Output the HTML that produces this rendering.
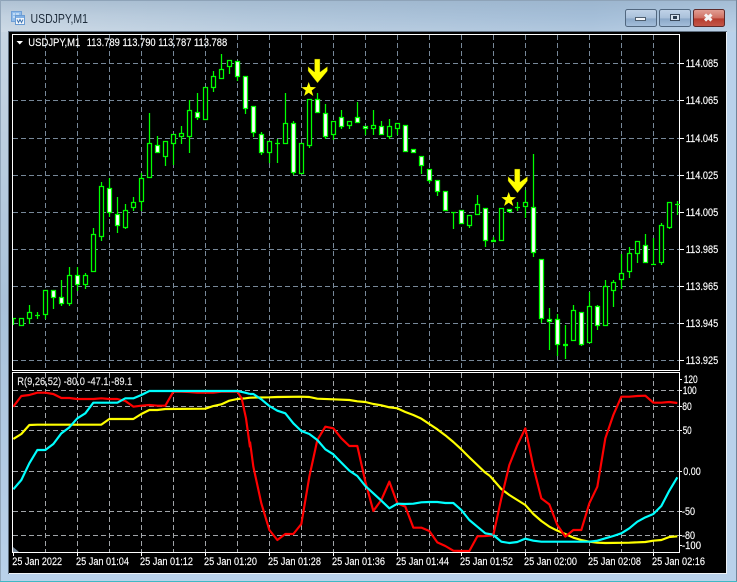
<!DOCTYPE html>
<html><head><meta charset="utf-8"><title>USDJPY,M1</title>
<style>html,body{margin:0;padding:0;background:#b9d1ea;width:737px;height:582px;overflow:hidden}svg{display:block}text{font-family:"Liberation Sans",sans-serif;font-size:11px;fill:#fff;stroke:#fff;stroke-width:.15px}</style></head>
<body>
<svg width="737" height="582" viewBox="0 0 737 582" xmlns="http://www.w3.org/2000/svg">
<defs>
<linearGradient id="tb" x1="0" y1="0" x2="1" y2="0"><stop offset="0" stop-color="#c8d6e3"/><stop offset=".35" stop-color="#b4c9dd"/><stop offset=".8" stop-color="#a6c0da"/><stop offset="1" stop-color="#b4cce4"/></linearGradient>
<linearGradient id="tv" x1="0" y1="0" x2="0" y2="1"><stop offset="0" stop-color="#8fa8c0" stop-opacity=".45"/><stop offset=".5" stop-color="#8fa8c0" stop-opacity=".1"/><stop offset="1" stop-color="#fff" stop-opacity=".12"/></linearGradient>
<linearGradient id="lf" x1="0" y1="0" x2="0" y2="1"><stop offset="0" stop-color="#c8d6e3"/><stop offset=".5" stop-color="#a9c2da"/><stop offset="1" stop-color="#b9d1ea"/></linearGradient>
<linearGradient id="bb" x1="0" y1="0" x2="0" y2="1"><stop offset="0" stop-color="#c0d3e8"/><stop offset=".5" stop-color="#a9c0da"/><stop offset=".55" stop-color="#8ba8c8"/><stop offset="1" stop-color="#a5bfdb"/></linearGradient>
<linearGradient id="bc" x1="0" y1="0" x2="0" y2="1"><stop offset="0" stop-color="#e2a196"/><stop offset=".5" stop-color="#cf6f62"/><stop offset=".55" stop-color="#b63c2e"/><stop offset="1" stop-color="#c4584a"/></linearGradient>
<clipPath id="p2"><rect x="13" y="373" width="666" height="179"/></clipPath>
</defs>
<rect width="737" height="582" fill="#b9d1ea"/>
<rect x="0" y="0" width="737" height="32" fill="url(#tb)"/>
<rect x="0" y="0" width="737" height="32" fill="url(#tv)"/>
<rect x="0" y="32" width="9" height="542" fill="url(#lf)"/>
<rect x="1" y="0" width="735" height="1" fill="#8ea3b8"/>
<rect x="0" y="0" width="1" height="582" fill="#93a7bb"/>
<rect x="736" y="0" width="1" height="582" fill="#6f8499"/>
<rect x="0" y="581" width="737" height="1" fill="#3fb8c4"/>
<!-- title icon -->
<g>
<rect x="11.500" y="11.500" width="10" height="10" fill="#8fbcec" stroke="#6f9fd6"/>
<path d="M13 14h2M16 14h3M13 17h3" stroke="#f2f7fc" fill="none"/>
<rect x="15.500" y="15.500" width="9" height="9" fill="#f2f6fb" stroke="#6a9bd2"/>
<rect x="16" y="16" width="8" height="2" fill="#7fb0e6"/>
<path d="M17 19.500l1.500 3 1.500-3 1.500 3 1.500-3" fill="none" stroke="#3f76b4"/>
</g>
<text x="30.500" y="23" textLength="57.500" lengthAdjust="spacingAndGlyphs" style="font-size:12.500px;fill:#1d2b3a;stroke:none">USDJPY,M1</text>
<!-- buttons -->
<rect x="625.500" y="9.500" width="31" height="17" rx="2" fill="url(#bb)" stroke="#51677f"/>
<rect x="659.500" y="9.500" width="31" height="17" rx="2" fill="url(#bb)" stroke="#51677f"/>
<rect x="693.500" y="9.500" width="31" height="17" rx="2" fill="url(#bc)" stroke="#5e2a2a"/>
<rect x="635.500" y="17.500" width="10" height="3" fill="#f3f6fa" stroke="#4f5f70"/>
<rect x="670.500" y="14.500" width="9" height="6" fill="#d7e2ee" stroke="#3c4a5c"/>
<rect x="673" y="16" width="4" height="3" fill="#2d3d50"/>
<path d="M705 14.500l6.500 6M711.500 14.500l-6.500 6" stroke="#f4f4f4" stroke-width="3" fill="none"/>
<!-- client -->
<rect x="8" y="31" width="719" height="543" fill="#5f6f80"/>
<rect x="9" y="32" width="717" height="541" fill="#000"/>
<rect x="9" y="573" width="718" height="1" fill="#eef3f8"/>
<rect x="726" y="32" width="1" height="542" fill="#eef3f8"/>
<!-- grid -->
<g stroke="#778899" stroke-width="1" stroke-dasharray="5 3" fill="none">
<path d="M45.500 35V370M77.500 35V370M109.500 35V370M141.500 35V370M173.500 35V370M205.500 35V370M237.500 35V370M269.500 35V370M301.500 35V370M333.500 35V370M365.500 35V370M397.500 35V370M429.500 35V370M461.500 35V370M493.500 35V370M525.500 35V370M557.500 35V370M589.500 35V370M621.500 35V370M653.500 35V370"/>
<path d="M13 63.500H679M13 100.500H679M13 138.500H679M13 175.500H679M13 212.500H679M13 249.500H679M13 286.500H679M13 323.500H679M13 360.500H679"/>
</g>
<g stroke="#a0a4a8" stroke-width="1" stroke-dasharray="5 3" fill="none">
<path d="M45.500 373V552M77.500 373V552M109.500 373V552M141.500 373V552M173.500 373V552M205.500 373V552M237.500 373V552M269.500 373V552M301.500 373V552M333.500 373V552M365.500 373V552M397.500 373V552M429.500 373V552M461.500 373V552M493.500 373V552M525.500 373V552M557.500 373V552M589.500 373V552M621.500 373V552M653.500 373V552"/>
<path d="M13 390.500H679M13 406.500H679M13 430.500H679M13 471.500H679M13 511.500H679M13 535.500H679"/>
</g>
<!-- pane borders -->
<g fill="none" stroke="#fff">
<rect x="12.500" y="34.500" width="667" height="336"/>
<rect x="12.500" y="372.500" width="667" height="180"/>
<path d="M680 63.500h4M680 100.500h4M680 138.500h4M680 175.500h4M680 212.500h4M680 249.500h4M680 286.500h4M680 323.500h4M680 360.500h4"/>
<path d="M680 379.500h2M680 390.500h2M680 406.500h2M680 430.500h2M680 471.500h2M680 511.500h2M680 535.500h2M680 545.500h2"/>
<path d="M13.500 552v4M77.500 552v4M141.500 552v4M205.500 552v4M269.500 552v4M333.500 552v4M397.500 552v4M461.500 552v4M525.500 552v4M589.500 552v4M653.500 552v4"/>
</g>
<path d="M13 547l6 5h-6z" fill="#778899"/>
<!-- wicks -->
<path fill="none" stroke="#0f0" stroke-width="1.250" d="M13.500 318V325M29.500 305V324M37.500 312V319M45.500 290V319M53.500 290V309M61.500 280V306M69.500 267V306M77.500 267V291M85.500 273V289M93.500 228V272M101.500 182V241M109.500 178V217M117.500 197V233M125.500 204V229M133.500 197V211M141.500 173V211M149.500 113V178M157.500 136V153M165.500 141V166M173.500 134V165M181.500 126V144M189.500 100V153M197.500 93V120M213.500 71V92M221.500 54V79M229.500 60V74M237.500 61V81M245.500 76V114M253.500 106V137M261.500 132V155M269.500 141V163M277.500 139V163M285.500 93V144M293.500 121V175M309.500 99V148M317.500 93V113M325.500 104V139M333.500 121V140M341.500 110V129M349.500 121V129M357.500 102V123M365.500 126V135M373.500 110V135M381.500 121V135M389.500 119V139M397.500 123V135M421.500 156V174M429.500 169V183M437.500 180V196M453.500 212V229M469.500 215V228M477.500 195V215M485.500 208V247M493.500 237V241M509.500 209V213M517.500 202V211M525.500 190V218M533.500 154V257M541.500 259V323M549.500 308V350M557.500 314V356M565.500 325V359M573.500 305V341M581.500 312V346M589.500 292V343M597.500 305V330M605.500 280V326M613.500 280V307M621.500 254V289M629.500 247V278M637.500 241V263M645.500 234V263M653.500 238V264M661.500 223V265M669.500 202V229M677.500 201V215"/>
<!-- hollow bodies -->
<path fill="#000" stroke="#0f0" stroke-width="1.250" d="M19.500 318.500h4V325.500h-4zM27.500 312.500h4V318.500h-4zM43.500 290.500h4V314.500h-4zM67.500 275.500h4V303.500h-4zM83.500 275.500h4V284.500h-4zM91.500 234.500h4V271.500h-4zM99.500 186.500h4V236.500h-4zM123.500 210.500h4V227.500h-4zM131.500 202.500h4V207.500h-4zM139.500 178.500h4V201.500h-4zM147.500 143.500h4V177.500h-4zM163.500 141.500h4V156.500h-4zM171.500 134.500h4V143.500h-4zM179.500 133.500h4V136.500h-4zM187.500 110.500h4V136.500h-4zM203.500 87.500h4V119.500h-4zM211.500 76.500h4V87.500h-4zM219.500 69.500h4V78.500h-4zM227.500 60.500h4V66.500h-4zM267.500 141.500h4V152.500h-4zM283.500 123.500h4V143.500h-4zM299.500 143.500h4V173.500h-4zM307.500 99.500h4V145.500h-4zM331.500 121.500h4V134.500h-4zM347.500 121.500h4V125.500h-4zM371.500 125.500h4V128.500h-4zM387.500 126.500h4V136.500h-4zM395.500 123.500h4V128.500h-4zM467.500 215.500h4V225.500h-4zM475.500 204.500h4V214.500h-4zM499.500 208.500h4V240.500h-4zM523.500 202.500h4V206.500h-4zM571.500 310.500h4V340.500h-4zM587.500 306.500h4V342.500h-4zM603.500 286.500h4V325.500h-4zM611.500 282.500h4V290.500h-4zM619.500 273.500h4V279.500h-4zM627.500 253.500h4V271.500h-4zM635.500 241.500h4V253.500h-4zM659.500 225.500h4V262.500h-4zM667.500 202.500h4V227.500h-4z"/>
<!-- white bodies -->
<path fill="#fff" stroke="#0f0" stroke-width="1.250" d="M51.500 290.500h4V297.500h-4zM59.500 297.500h4V303.500h-4zM75.500 275.500h4V284.500h-4zM107.500 188.500h4V212.500h-4zM115.500 214.500h4V225.500h-4zM155.500 145.500h4V152.500h-4zM195.500 112.500h4V117.500h-4zM235.500 61.500h4V76.500h-4zM243.500 76.500h4V108.500h-4zM251.500 106.500h4V132.500h-4zM259.500 134.500h4V152.500h-4zM291.500 123.500h4V172.500h-4zM315.500 99.500h4V112.500h-4zM323.500 113.500h4V136.500h-4zM339.500 117.500h4V126.500h-4zM355.500 117.500h4V122.500h-4zM363.500 126.500h4V128.500h-4zM379.500 126.500h4V134.500h-4zM403.500 125.500h4V151.500h-4zM411.500 149.500h4V152.500h-4zM419.500 156.500h4V165.500h-4zM427.500 169.500h4V180.500h-4zM435.500 180.500h4V191.500h-4zM443.500 191.500h4V210.500h-4zM459.500 210.500h4V223.500h-4zM483.500 208.500h4V240.500h-4zM507.500 209.500h4V211.500h-4zM531.500 207.500h4V252.500h-4zM539.500 259.500h4V318.500h-4zM547.500 319.500h4V321.500h-4zM555.500 319.500h4V344.500h-4zM579.500 312.500h4V344.500h-4zM595.500 306.500h4V325.500h-4zM643.500 245.500h4V262.500h-4z"/>
<!-- doji -->
<path fill="none" stroke="#0f0" stroke-width="1.250" d="M13 318.500h3M35 315.500h5M275 143.500h5M451 212.500h5M491 240.500h5M491 241.500h5M515 207.500h5M563 344.500h5M563 345.500h5M651 264.500h5M675 204.500h5"/>
<!-- arrows and stars -->
<g fill="#ff0" stroke="#4a4a00" stroke-width=".4">
<polygon points="314.500,59 320,59 320,72 327.500,66.500 327.500,71 317.500,83 308,71 308,66.500 314.500,72"/>
<polygon points="514.500,169 520,169 520,182 527.500,176.500 527.500,181 517.500,193 508,181 508,176.500 514.500,182"/>
</g>
<g fill="#ff0">
<polygon points="308.700,82 310.500,87 316,87.200 311.700,90.500 313.300,96 308.700,92.800 304.100,96 305.700,90.500 301.400,87.200 306.900,87"/>
<polygon points="508.700,192 510.500,197 516,197.200 511.700,200.500 513.300,206 508.700,202.800 504.100,206 505.700,200.500 501.400,197.200 506.900,197"/>
</g>
<!-- indicator lines -->
<g clip-path="url(#p2)" fill="none" stroke-linejoin="round">
<g transform="translate(0,370) scale(.33333)" stroke-width="6.500">
<polyline stroke="#ff0" points="40,207 64,192 88,165 112,164 304,164 328,147 400,147 424,132 448,120 472,120 496,117 616,116 640,108 664,103 688,92 712,87 736,85 750,83"/>
<polyline stroke="#f00" points="40,110 64,78 88,75 112,68 136,68 160,72 184,84 208,84 232,87 256,87 280,87 304,85 328,87 352,87 376,93 400,110 424,107 448,105 472,107 496,107 520,65 544,65 568,66 592,68 616,68 640,68 664,65 688,65 712,65 725,85 738,145 750,232"/>
<polyline stroke="#0ff" points="40,358 64,330 88,280 112,240 136,240 160,222 184,190 208,172 232,145 256,130 280,98 304,98 328,98 352,98 376,85 400,85 424,75 448,63 472,63 712,63 736,68 750,72"/>
</g>
<g transform="translate(250,370) scale(.33333)" stroke-width="6.500">
<polyline stroke="#ff0" points="0,83 58,82 82,81 154,80 178,81 202,86 250,88 298,90 322,94 346,96 370,102 394,106 418,112 442,115 466,126 490,135 514,146 538,162 562,178 586,196 610,216 634,238 658,262 682,285 706,308 720,318"/>
<polyline stroke="#f00" points="0,215 10,290 34,400 58,480 82,510 106,492 130,492 154,462 178,320 202,210 226,170 250,175 274,205 298,228 322,228 346,335 370,423 394,390 418,335 442,400 466,410 490,473 514,473 538,483 562,517 586,528 610,542 634,543 658,543 682,499 706,498 730,496"/>
<polyline stroke="#0ff" points="0,72 10,72 34,88 58,108 82,122 106,130 130,160 154,183 178,192 202,210 226,238 250,253 274,278 298,302 322,318 346,348 370,370 394,392 418,415 442,401 466,402 490,401 514,397 538,396 562,396 586,399 610,399 634,420 658,450 682,470 706,490 730,494"/>
</g>
<g transform="translate(490,370) scale(.33333)" stroke-width="6.500">
<polyline stroke="#ff0" points="0,318 34,357 58,375 82,390 106,405 130,432 154,453 178,470 202,482 226,492 250,503 274,510 298,515 322,518 346,519 418,518 466,516 490,512 514,510 538,501 562,499"/>
<polyline stroke="#f00" points="10,495 34,385 58,285 82,225 106,175 130,290 154,385 178,403 202,465 226,500 250,480 274,480 298,400 322,350 346,205 370,135 394,80 418,80 442,78 466,77 490,98 514,98 538,96 562,99"/>
<polyline stroke="#0ff" points="10,495 34,515 58,519 82,516 106,506 130,512 154,515 298,515 322,512 346,505 370,498 394,490 418,475 442,455 466,442 490,432 514,408 538,362 562,322"/>
</g>
</g>
<!-- header text -->
<polygon points="16.500,41 23,41 19.750,44.500" fill="#fff"/>
<text x="28.300" y="46" textLength="52" lengthAdjust="spacingAndGlyphs">USDJPY,M1</text>
<text x="86.700" y="46" textLength="140.500" lengthAdjust="spacingAndGlyphs">113.789 113.790 113.787 113.788</text>
<text x="17.300" y="385" textLength="115" lengthAdjust="spacingAndGlyphs" style="fill:#e4e4e4">R(9,26,52) -80.0 -47.1 -89.1</text>
<!-- price labels -->
<g>
<text x="685.700" y="67" textLength="32.500" lengthAdjust="spacingAndGlyphs">114.085</text>
<text x="685.700" y="104" textLength="32.500" lengthAdjust="spacingAndGlyphs">114.065</text>
<text x="685.700" y="142" textLength="32.500" lengthAdjust="spacingAndGlyphs">114.045</text>
<text x="685.700" y="179" textLength="32.500" lengthAdjust="spacingAndGlyphs">114.025</text>
<text x="685.700" y="216" textLength="32.500" lengthAdjust="spacingAndGlyphs">114.005</text>
<text x="685.700" y="253" textLength="32.500" lengthAdjust="spacingAndGlyphs">113.985</text>
<text x="685.700" y="290" textLength="32.500" lengthAdjust="spacingAndGlyphs">113.965</text>
<text x="685.700" y="327" textLength="32.500" lengthAdjust="spacingAndGlyphs">113.945</text>
<text x="685.700" y="364" textLength="32.500" lengthAdjust="spacingAndGlyphs">113.925</text>
<text x="683.700" y="383" textLength="14" lengthAdjust="spacingAndGlyphs">120</text>
<text x="682.700" y="394" textLength="14" lengthAdjust="spacingAndGlyphs">100</text>
<text x="682.300" y="410" textLength="9.500" lengthAdjust="spacingAndGlyphs">80</text>
<text x="682.700" y="434" textLength="9" lengthAdjust="spacingAndGlyphs">50</text>
<text x="683.300" y="475" textLength="17.500" lengthAdjust="spacingAndGlyphs">0.00</text>
<text x="682" y="515" textLength="13" lengthAdjust="spacingAndGlyphs">-50</text>
<text x="682" y="539" textLength="13" lengthAdjust="spacingAndGlyphs">-80</text>
<text x="682" y="549" textLength="19" lengthAdjust="spacingAndGlyphs">-100</text>
</g>
<!-- time labels -->
<g>
<text x="12.300" y="565" textLength="49.700" lengthAdjust="spacingAndGlyphs">25 Jan 2022</text>
<text x="76" y="565" textLength="53" lengthAdjust="spacingAndGlyphs">25 Jan 01:04</text>
<text x="140" y="565" textLength="53" lengthAdjust="spacingAndGlyphs">25 Jan 01:12</text>
<text x="204" y="565" textLength="53" lengthAdjust="spacingAndGlyphs">25 Jan 01:20</text>
<text x="268" y="565" textLength="53" lengthAdjust="spacingAndGlyphs">25 Jan 01:28</text>
<text x="332" y="565" textLength="53" lengthAdjust="spacingAndGlyphs">25 Jan 01:36</text>
<text x="396" y="565" textLength="53" lengthAdjust="spacingAndGlyphs">25 Jan 01:44</text>
<text x="460" y="565" textLength="53" lengthAdjust="spacingAndGlyphs">25 Jan 01:52</text>
<text x="524" y="565" textLength="53" lengthAdjust="spacingAndGlyphs">25 Jan 02:00</text>
<text x="588" y="565" textLength="53" lengthAdjust="spacingAndGlyphs">25 Jan 02:08</text>
<text x="652" y="565" textLength="53" lengthAdjust="spacingAndGlyphs">25 Jan 02:16</text>
</g>
</svg>
</body></html>
